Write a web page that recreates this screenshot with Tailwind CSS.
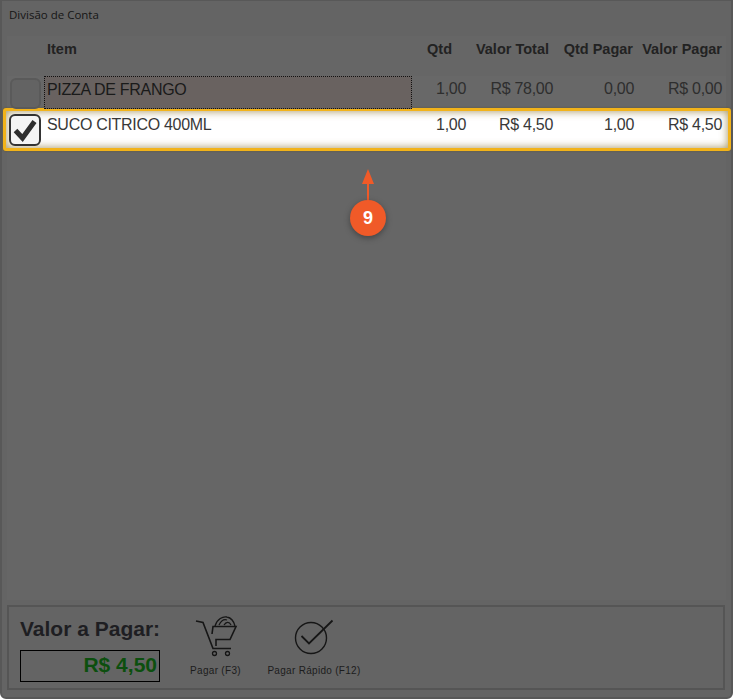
<!doctype html>
<html>

<head>
    <meta charset="UTF-8">
    <script src="https://cdn.jsdelivr.net/npm/@tailwindcss/browser@4"></script>
</head>

<body>
    <div class="relative w-[733px] h-[699px] overflow-hidden bg-[#646464] font-['Liberation_Sans',sans-serif] border-x-2 border-t border-b-2 border-x-[#585858] border-t-[#585858] border-b-[#585858] rounded-b-md">

        <div class="h-[35px] pl-[7px] pt-[6px] text-[11.5px] leading-[15px] text-[#161616] font-['Open_Sans',sans-serif]">Divisão de Conta</div>

        <div class="mx-[5px] h-[564px] bg-[#666666]">
            <!-- header -->
            <div class="grid grid-cols-[38px_367px_54px_87px_81px_88px] h-[35px] items-center pb-[8px] text-[14.5px] font-bold text-[#222222]">
                <div></div>
                <div class="pl-[2px]">Item</div>
                <div class="text-right pr-[14px]">Qtd</div>
                <div class="text-right pr-[4px]">Valor Total</div>
                <div class="text-right pr-[1px]">Qtd Pagar</div>
                <div class="text-right">Valor Pagar</div>
            </div>

            <!-- row 1 -->
            <div class="grid grid-cols-[38px_367px_54px_87px_81px_88px] h-[32px] mt-[5px] items-center bg-[#686868] text-[16px] tracking-[-0.3px] text-[#2e2e2e]">
                <div class="pl-[3px] pt-[2px]">
                    <div class="w-[31px] h-[31px] rounded-[6px] border-2 border-[#5a5a5a] bg-[#636363]"></div>
                </div>
                <div class="h-full -ml-[1px] pl-[2px] leading-[25px] border border-dotted border-[#111111] bg-[#696260] text-[#1a1a1a]">PIZZA DE FRANGO</div>
                <div class="text-right pb-[7px]">1,00</div>
                <div class="text-right pb-[7px]">R$ 78,00</div>
                <div class="text-right pb-[7px]">0,00</div>
                <div class="text-right pb-[7px]">R$ 0,00</div>
            </div>

            <!-- row 2, highlighted -->
            <div class="grid grid-cols-[38px_367px_54px_87px_81px_88px] h-[43px] -ml-[4px] -mr-[5px] pl-[1px] items-center rounded-[3px] border-[3px] border-[#f2b31a] bg-white shadow-[inset_0_0_8px_rgba(130,105,30,0.75),0_0_2px_rgba(90,70,10,0.6)] text-[16px] tracking-[-0.3px] text-[#383838]">
                <div class="pl-[2px]">
                    <div class="w-[32px] h-[32px] rounded-[6px] border-[2.5px] border-[#333333] bg-[#f4f4f4] flex items-center justify-center">
                        <svg width="26" height="24" viewBox="0 0 26 24"><path d="M3.500 12.500 L10.500 20 L22.500 3.500" fill="none" stroke="#2e2e2e" stroke-width="5" stroke-linejoin="miter"/></svg>
                    </div>
                </div>
                <div class="pl-[2px] pb-[9px]">SUCO CITRICO 400ML</div>
                <div class="text-right pb-[9px]">1,00</div>
                <div class="text-right pb-[9px]">R$ 4,50</div>
                <div class="text-right pb-[9px]">1,00</div>
                <div class="text-right pb-[9px]">R$ 4,50</div>
            </div>
        </div>

        <!-- bottom panel -->
        <div class="mx-[5px] mt-[5px] w-[718px] h-[85px] border-2 border-[#555555] bg-[#646464] flex">
            <div class="w-[172px] pl-[11px] pt-[11px]">
                <div class="text-[21px] leading-[22px] font-bold text-[#1e1e22]">Valor a Pagar:</div>
                <div class="w-[140px] h-[32px] mt-[10px] border border-black pr-[2px] text-right text-[21px] leading-[28px] font-bold text-[#0c4f0e]">R$ 4,50</div>
            </div>
            <div class="w-[75px] flex flex-col items-center -ml-[3px]">
                <svg class="mt-[6px]" width="50" height="46" viewBox="190 612 50 46" fill="none" stroke="#161616" stroke-width="1.3">
                    <path d="M195 620 L202 621.5 L212 647.5 L230 647.5" stroke-width="1.6"/>
                    <path d="M211 633 L212 625.5 L235 625.5 L229 638.5 L215 638.5 L215 645" stroke-width="1.6"/>
                    <path d="M214 625 C216 618 222 615 226 616 C231 617 233 621 234 625 M218 624 C220 620 223 618 226 619 M223 624 C225 621 228 620 230 624"/>
                    <circle cx="213.500" cy="652.500" r="2"/>
                    <circle cx="226.500" cy="652.500" r="2"/>
                </svg>
                <div class="mt-[6px] text-[10px] leading-[12px] whitespace-nowrap text-[#1c1c1c] tracking-[0.3px]">Pagar (F3)</div>
            </div>
            <div class="w-[100px] flex flex-col items-center ml-[11px]">
                <svg class="mt-[6px]" width="50" height="46" viewBox="290 612 50 46" fill="none" stroke="#161616">
                    <circle cx="312" cy="637" r="15.500" stroke-width="1.4"/>
                    <path d="M302.500 635 L310 642.500 L333.500 619.500" stroke-width="1.8"/>
                </svg>
                <div class="mt-[6px] text-[10px] leading-[12px] whitespace-nowrap text-[#1c1c1c] tracking-[0.3px]">Pagar Rápido (F12)</div>
            </div>
        </div>

        <!-- callout 9 -->
        <svg class="absolute left-[354px] top-[167px]" width="28" height="40" viewBox="0 0 28 40">
            <path d="M12 15 V36" stroke="#f05a28" stroke-width="2" fill="none"/>
            <path d="M12 1 L6 16 L18 16 Z" fill="#f05a28"/>
        </svg>
        <div class="absolute left-[348px] top-[199px] w-[36px] h-[36px] rounded-full bg-[#f05a28] shadow-[0_2px_6px_rgba(0,0,0,0.35)] flex items-center justify-center text-white font-bold text-[18px]">9</div>
    </div>
</body>

</html>
